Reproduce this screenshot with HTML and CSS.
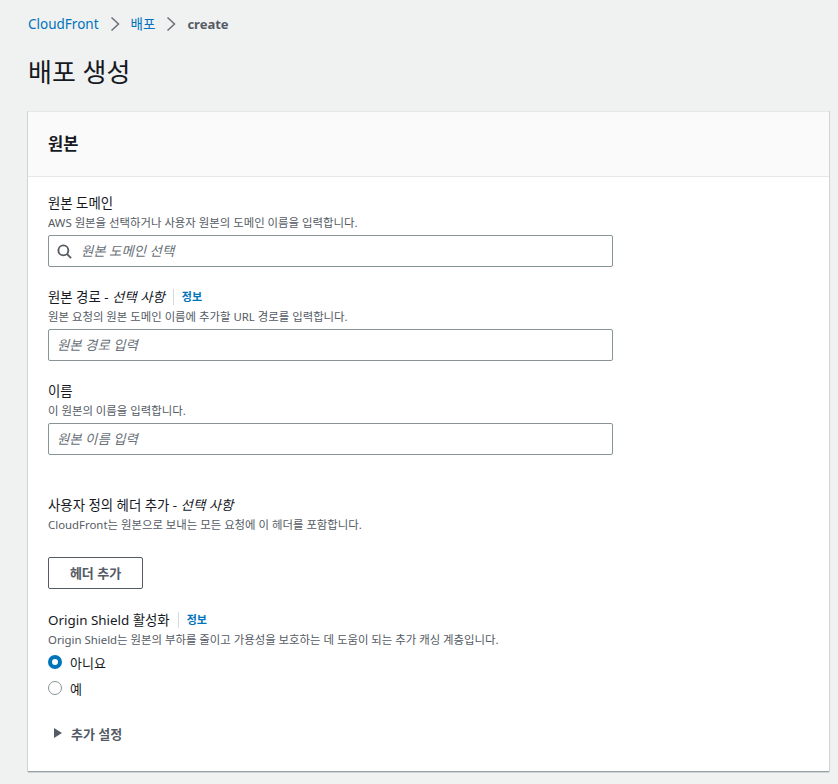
FILE: index.html
```html
<!DOCTYPE html>
<html lang="ko">
<head>
<meta charset="utf-8">
<title>배포 생성</title>
<link rel="stylesheet" href="styles.css">
</head>
<body>
<nav class="crumbs">
  <a class="link">CloudFront</a>
  <svg class="chev" width="10" height="16" viewBox="0 0 10 16"><path d="M1.500 1.500 8.500 8l-7 6.500"/></svg>
  <a class="link">배포</a>
  <svg class="chev" width="10" height="16" viewBox="0 0 10 16"><path d="M1.500 1.500 8.500 8l-7 6.500"/></svg>
  <span class="current">create</span>
</nav>
<h1 class="title">배포 생성</h1>
<section class="card">
  <header class="card-head"><h2>원본</h2></header>
  <div class="card-body">
    <div class="field f1">
      <div class="label">원본 도메인</div>
      <div class="desc">AWS 원본을 선택하거나 사용자 원본의 도메인 이름을 입력합니다.</div>
      <div class="input search">
        <svg width="15" height="15" viewBox="0 0 16 16" class="mag"><circle cx="6.800" cy="6.800" r="5.300"/><path d="M10.500 10.500 15 15"/></svg>
        <span class="ph">원본 도메인 선택</span>
      </div>
    </div>
    <div class="field f2">
      <div class="label">원본 경로 - <i>선택 사항</i><span class="info">정보</span></div>
      <div class="desc">원본 요청의 원본 도메인 이름에 추가할 URL 경로를 입력합니다.</div>
      <div class="input"><span class="ph">원본 경로 입력</span></div>
    </div>
    <div class="field f3">
      <div class="label">이름</div>
      <div class="desc">이 원본의 이름을 입력합니다.</div>
      <div class="input"><span class="ph">원본 이름 입력</span></div>
    </div>
    <div class="field f4">
      <div class="label">사용자 정의 헤더 추가 - <i>선택 사항</i></div>
      <div class="desc">CloudFront는 원본으로 보내는 모든 요청에 이 헤더를 포함합니다.</div>
      <button class="btn">헤더 추가</button>
    </div>
    <div class="field f5">
      <div class="label">Origin Shield 활성화<span class="info">정보</span></div>
      <div class="desc d5">Origin Shield는 원본의 부하를 줄이고 가용성을 보호하는 데 도움이 되는 추가 캐싱 계층입니다.</div>
      <div class="radio"><span class="dot on"></span>아니요</div>
      <div class="radio"><span class="dot"></span>예</div>
    </div>
    <div class="expander"><span class="tri"></span>추가 설정</div>
  </div>
</section>
</body>
</html>
```
FILE: styles.css
```css
* { box-sizing: border-box; }
html, body { margin: 0; height: 784px; overflow: hidden; }
body {
  background: #f0f1f1;
  padding: 0 10px 0 28px;
  font-family: "Noto Sans", "Noto Sans CJK KR", sans-serif;
  color: #16191f;
}
.crumbs {
  display: flex;
  align-items: center;
  height: 16px;
  margin-top: 16px;
  font-size: 13.500px;
  line-height: 16px;
}
.link { color: #0073bb; }
.chev { margin: 0 11px; flex: none; }
.chev path { fill: none; stroke: #687078; stroke-width: 1.500; }
.current { color: #545b64; font-weight: 700; font-size: 13px; }
.title {
  margin: 20px 0 0;
  font-size: 26px;
  line-height: 40px;
  font-weight: 400;
  height: 40px;
}
.card {
  margin-top: 19px;
  width: 801px;
  height: 661px;
  background: #fff;
  border-top: 1px solid #e6e8e8;
  box-shadow: -1px 0 0 #d0d4d4, 1px 0 0 #d0d4d4, 0 1px 0 #d0d4d4;
  border-bottom: 1px solid #95a1a2;
}
.card-head {
  height: 65px;
  background: #fafafa;
  border-bottom: 1px solid #e6e8e8;
  padding: 0 20px;
  display: flex;
  align-items: center;
}
.card-head h2 { margin: 0; font-size: 16.500px; line-height: 22px; font-weight: 700; }
.card-body { padding: 0 20px; }
.label { font-size: 13.400px; line-height: 20px; height: 20px; display: flex; align-items: center; white-space: pre-wrap; }
.label i { font-style: italic; }
.info {
  color: #0073bb;
  font-size: 11px;
  font-weight: 700;
  margin-left: 8px;
  padding-left: 8px;
  border-left: 1px solid #d5dbdb;
  height: 16px;
  line-height: 16px;
}
.desc { font-size: 11.400px; line-height: 16px; height: 16px; margin-top: 2px; color: #545b64; white-space: nowrap; }
.input {
  width: 565px;
  height: 32px;
  margin-top: 4px;
  background: #fff;
  border: 1px solid #879596;
  border-radius: 2px;
  display: flex;
  align-items: center;
  padding-left: 8px;
}
.ph { font-size: 13.400px; font-style: italic; color: #687078; line-height: 20px; }
.search .ph { margin-left: 9px; }
.mag { flex: none; }
.mag circle, .mag path { fill: none; stroke: #545b64; stroke-width: 2; }
.f1 { margin-top: 16px; }
.f2 { margin-top: 20px; }
.f3 { margin-top: 20px; }
.f4 { margin-top: 40px; }
.f5 { margin-top: 21px; }
.btn {
  display: block;
  width: 95px;
  height: 32px;
  margin-top: 24px;
  background: #fff;
  border: 1px solid #545b64;
  border-radius: 2px;
  color: #545b64;
  font: 700 13px/20px "Noto Sans", "Noto Sans CJK KR", sans-serif;
  padding: 0;
}
.d5 { margin-bottom: 1px; }
.radio { display: flex; align-items: center; height: 26px; font-size: 13px; }
.dot {
  width: 14px;
  height: 14px;
  border-radius: 50%;
  border: 1px solid #879596;
  margin-right: 8px;
  background: #fff;
}
.dot.on { border: 4px solid #0073bb; }
.expander {
  display: flex;
  align-items: center;
  margin-top: 22px;
  height: 20px;
  padding-left: 6px;
  font-size: 13px;
  font-weight: 700;
  color: #545b64;
}
.tri {
  width: 0;
  height: 0;
  border-left: 8px solid #545b64;
  border-top: 5px solid transparent;
  border-bottom: 5px solid transparent;
  margin-right: 9px;
}
```
